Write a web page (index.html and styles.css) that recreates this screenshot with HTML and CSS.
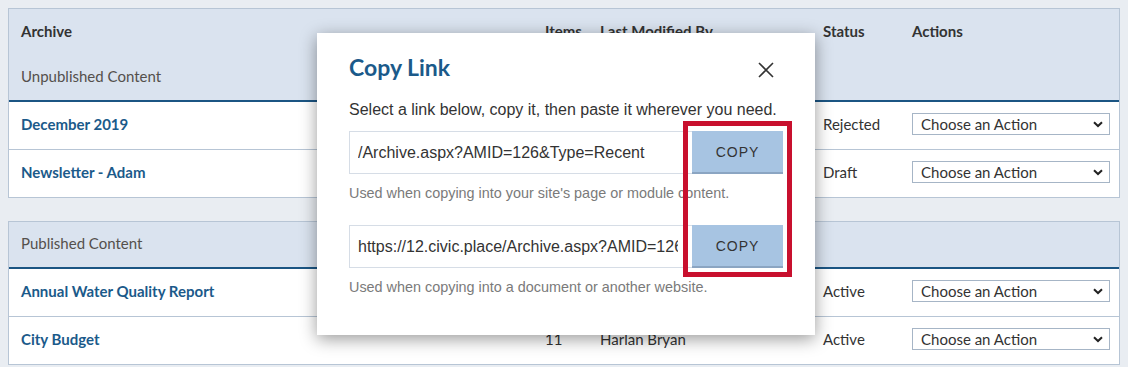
FILE: index.html
```html
<!DOCTYPE html>
<html lang="en">
<head>
    <meta charset="UTF-8">
    <meta name="viewport" content="width=device-width, initial-scale=1.0">
    <title>Archive - Copy Link</title>
    <link rel="stylesheet" href="styles.css">
</head>
<body>
    <div class="archive-table">
        <div class="row head-row">
            <div>Archive</div>
            <div>Items</div>
            <div>Last Modified By</div>
            <div>Status</div>
            <div>Actions</div>
        </div>
        <div class="row group-row">
            <div>Unpublished Content</div>
        </div>
        <div class="row body-row">
            <div class="name">December 2019</div>
            <div></div>
            <div></div>
            <div>Rejected</div>
            <div><div class="select"><span>Choose an Action</span><svg width="10" height="7" viewBox="0 0 10 7"><path d="M1 1.2 L5 5 L9 1.2" fill="none" stroke="#222" stroke-width="2"/></svg></div></div>
        </div>
        <div class="row body-row">
            <div class="name">Newsletter - Adam</div>
            <div></div>
            <div></div>
            <div>Draft</div>
            <div><div class="select"><span>Choose an Action</span><svg width="10" height="7" viewBox="0 0 10 7"><path d="M1 1.2 L5 5 L9 1.2" fill="none" stroke="#222" stroke-width="2"/></svg></div></div>
        </div>
    </div>

    <div class="archive-table">
        <div class="row group-row">
            <div>Published Content</div>
        </div>
        <div class="row body-row">
            <div class="name">Annual Water Quality Report</div>
            <div></div>
            <div></div>
            <div>Active</div>
            <div><div class="select"><span>Choose an Action</span><svg width="10" height="7" viewBox="0 0 10 7"><path d="M1 1.2 L5 5 L9 1.2" fill="none" stroke="#222" stroke-width="2"/></svg></div></div>
        </div>
        <div class="row body-row">
            <div class="name">City Budget</div>
            <div>11</div>
            <div>Harlan Bryan</div>
            <div>Active</div>
            <div><div class="select"><span>Choose an Action</span><svg width="10" height="7" viewBox="0 0 10 7"><path d="M1 1.2 L5 5 L9 1.2" fill="none" stroke="#222" stroke-width="2"/></svg></div></div>
        </div>
    </div>

    <!-- Copy link modal -->
    <div class="modal">
        <div class="modal-header">
            <h2>Copy Link</h2>
            <svg class="close" width="16" height="16" viewBox="0 0 16 16"><path d="M1 1 L15 15 M15 1 L1 15" stroke="#333" stroke-width="1.6"/></svg>
        </div>
        <p class="intro">Select a link below, copy it, then paste it wherever you need.</p>
        <div class="link-row">
            <input class="link-input" type="text" readonly value="/Archive.aspx?AMID=126&amp;Type=Recent">
            <button class="copy-btn">COPY</button>
        </div>
        <p class="help">Used when copying into your site's page or module content.</p>
        <div class="link-row second">
            <input class="link-input" type="text" readonly value="https://12.civic.place/Archive.aspx?AMID=126&amp;Type=Recent">
            <button class="copy-btn">COPY</button>
        </div>
        <p class="help">Used when copying into a document or another website.</p>
    </div>

    <!-- highlight around copy buttons -->
    <div class="highlight"></div>
</body>
</html>
```

FILE: styles.css
```css
body {
    margin: 8px;
    background-color: #e9edf2;
    font-family: Lato, "Open Sans", sans-serif;
    font-size: 15px;
    color: #333;
}
.archive-table {
    border: 1px solid #b7c5d5;
    background: white;
    margin-bottom: 23px;
}
.row {
    box-sizing: border-box;
    display: grid;
    grid-template-columns: 524px 55px 223px 89px 1fr;
    align-items: center;
    padding: 0 9px 3px 12px;
}
.head-row {
    height: 46px;
    background-color: #dae3ef;
    font-weight: bold;
    color: #333;
}
.group-row {
    height: 47px;
    background-color: #dae3ef;
    color: #54504c;
    border-bottom: 2px solid #1b5583;
}
.group-row div {
    grid-column: 1 / -1;
}
.body-row {
    height: 48px;
    border-bottom: 1px solid #b7c5d5;
}
.body-row:last-child {
    height: 47px;
    border-bottom: none;
}
.name {
    font-weight: bold;
    color: #1b5a8a;
}
.select {
    display: flex;
    justify-content: space-between;
    align-items: center;
    height: 20px;
    border: 1px solid #a6b5c6;
    padding: 0 6px 0 8px;
    color: #333;
}
/* Modal */
.modal {
    position: absolute;
    left: 317px;
    top: 33px;
    width: 434px;
    height: 262px;
    padding: 20px 32px 20px 32px;
    background: white;
    box-shadow: 0 4px 16px rgba(0, 0, 0, 0.4);
    font-family: "Liberation Sans", Arial, sans-serif;
}
.modal-header {
    display: flex;
    justify-content: space-between;
    align-items: center;
    height: 28px;
}
.modal-header h2 {
    margin: 0;
    font-family: Lato, sans-serif;
    font-size: 23px;
    font-weight: bold;
    color: #1b5a8a;
}
.close {
    margin: 6px 9px 0 0;
}
.intro {
    margin: 19px 0 0;
    font-size: 16px;
    line-height: 20px;
    color: #333;
}
.link-row {
    display: flex;
    margin-top: 11px;
    height: 43px;
}
.link-row.second {
    margin-top: 23px;
}
.link-input {
    flex: 1;
    min-width: 0;
    margin: 0;
    border: 1px solid #d6dde6;
    border-right: none;
    padding: 0 14px 0 8px;
    font-family: "Liberation Sans", Arial, sans-serif;
    font-size: 16px;
    color: #333;
    background: white;
    outline: none;
}
.copy-btn {
    width: 91px;
    border: none;
    border-bottom: 2px solid #8ba5c2;
    background-color: #a7c4e2;
    font-family: "Liberation Sans", Arial, sans-serif;
    font-size: 14px;
    letter-spacing: 1px;
    color: #333;
    padding: 0;
}
.help {
    margin: 10px 0 0;
    font-size: 14.4px;
    line-height: 18px;
    color: #7a7a7a;
}
.highlight {
    position: absolute;
    left: 683px;
    top: 121px;
    width: 99px;
    height: 146px;
    border: 5px solid #c8102e;
}
```
